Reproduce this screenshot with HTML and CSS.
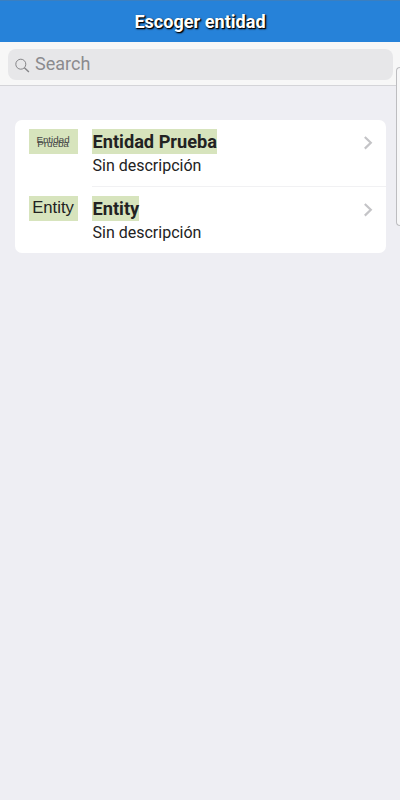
FILE: index.html
```html
<!DOCTYPE html>
<html lang="es">
<head>
  <meta charset="UTF-8">
  <meta name="viewport" content="width=device-width, initial-scale=1.0">
  <title>Escoger entidad</title>
  <link rel="stylesheet" href="styles.css">
</head>
<body>

  <header class="navbar">
    <h1>Escoger entidad</h1>
  </header>

  <div class="search-bar">
    <label class="search-field">
      <svg class="search-icon" viewBox="0 0 16 16" fill="none" stroke="#858588">
        <circle cx="5.8" cy="6.2" r="5" stroke-width="1"/>
        <path d="M9.4 9.8l4.5 4.3" stroke-width="1.4"/>
      </svg>
      <input type="text" placeholder="Search">
    </label>
  </div>

  <ul class="entity-list">
    <li class="entity">
      <div class="thumb thumb-double"><span>Entidad</span><span>Prueba</span></div>
      <div class="entity-content">
        <div class="entity-text">
          <h2>Entidad Prueba</h2>
          <p>Sin descripción</p>
        </div>
        <svg class="chevron" viewBox="0 0 10 16" fill="none" stroke="#c4c4c7" stroke-width="2.2">
          <path d="M1.8 2l6 5.8-6 5.8"/>
        </svg>
      </div>
    </li>
    <li class="entity">
      <div class="thumb"><span>Entity</span></div>
      <div class="entity-content">
        <div class="entity-text">
          <h2>Entity</h2>
          <p>Sin descripción</p>
        </div>
        <svg class="chevron" viewBox="0 0 10 16" fill="none" stroke="#c4c4c7" stroke-width="2.2">
          <path d="M1.8 2l6 5.8-6 5.8"/>
        </svg>
      </div>
    </li>
  </ul>

  <!-- Edge panel handle -->
  <div class="edge-handle"></div>

</body>
</html>
```

FILE: styles.css
```css
* {
  box-sizing: border-box;
}

body {
  margin: 0;
  height: 100vh;
  overflow: hidden;
  position: relative;
  background-color: #eeeef3;
  font-family: Roboto, sans-serif;
  color: #222;
}

h1, h2, p {
  margin: 0;
}

.navbar {
  height: 42px;
  display: flex;
  justify-content: center;
  align-items: center;
  background-color: #2682d9;
  border-top: 1px solid #3b7fc0;
}

.navbar h1 {
  font-size: 18.1px;
  line-height: 22px;
  font-weight: 700;
  color: white;
  text-shadow: 1px 1px 2px #000, 1px 1px 1px #000;
}

.search-bar {
  height: 44px;
  padding: 7px 7px 6px 8px;
  background-color: #f7f7f7;
  border-bottom: 1px solid #d4d4d8;
}

.search-field {
  height: 31px;
  display: flex;
  align-items: center;
  padding-left: 7px;
  background-color: #e7e7e9;
  border-radius: 8px;
}

.search-icon {
  width: 16px;
  height: 16px;
  margin-top: 2px;
  flex: none;
}

.search-field input {
  flex: 1;
  min-width: 0;
  padding: 0 0 2px 4px;
  border: none;
  outline: none;
  background: none;
  font: 18px Roboto, sans-serif;
}

.search-field input::placeholder {
  color: #8b8b8e;
}

.entity-list {
  margin: 34px 14px 0 14.5px;
  padding: 0;
  list-style: none;
  background-color: white;
  border-radius: 7px;
  overflow: hidden;
}

.entity {
  display: flex;
  padding-left: 14.5px;
}

.thumb {
  width: 49px;
  height: 25px;
  margin: 9px 14px 0 0;
  padding: 0 1px 2px 0;
  display: flex;
  flex-direction: column;
  align-items: center;
  justify-content: center;
  background-color: #d7e4bd;
  font: 16.7px/22px "Liberation Sans", sans-serif;
}

.thumb-double {
  padding: 0 1px 0 0;
  font-size: 9.8px;
  line-height: 4px;
  color: #444;
}

.entity-content {
  flex: 1;
  height: 67px;
  display: flex;
  justify-content: space-between;
  padding: 9px 13px 0 0;
  border-bottom: 1px solid #f1f1f3;
}

.entity:last-child .entity-content {
  height: 66px;
  border-bottom: none;
}

.entity h2 {
  width: fit-content;
  padding-left: 0.5px;
  font-size: 18.2px;
  line-height: 25px;
  font-weight: 700;
  background-color: #d7e4bd;
}

.entity p {
  padding-left: 0.5px;
  font-size: 16px;
  line-height: 24px;
}

.chevron {
  width: 10px;
  height: 16px;
  margin-top: 6px;
}

/* Sits over the right edge of the screen */
.edge-handle {
  position: absolute;
  top: 67px;
  right: 0;
  width: 4px;
  height: 159px;
  background-color: #f7f7f8;
  border: 1px solid #bdbdc0;
  border-right: none;
  border-radius: 4px 0 0 4px;
}
```
